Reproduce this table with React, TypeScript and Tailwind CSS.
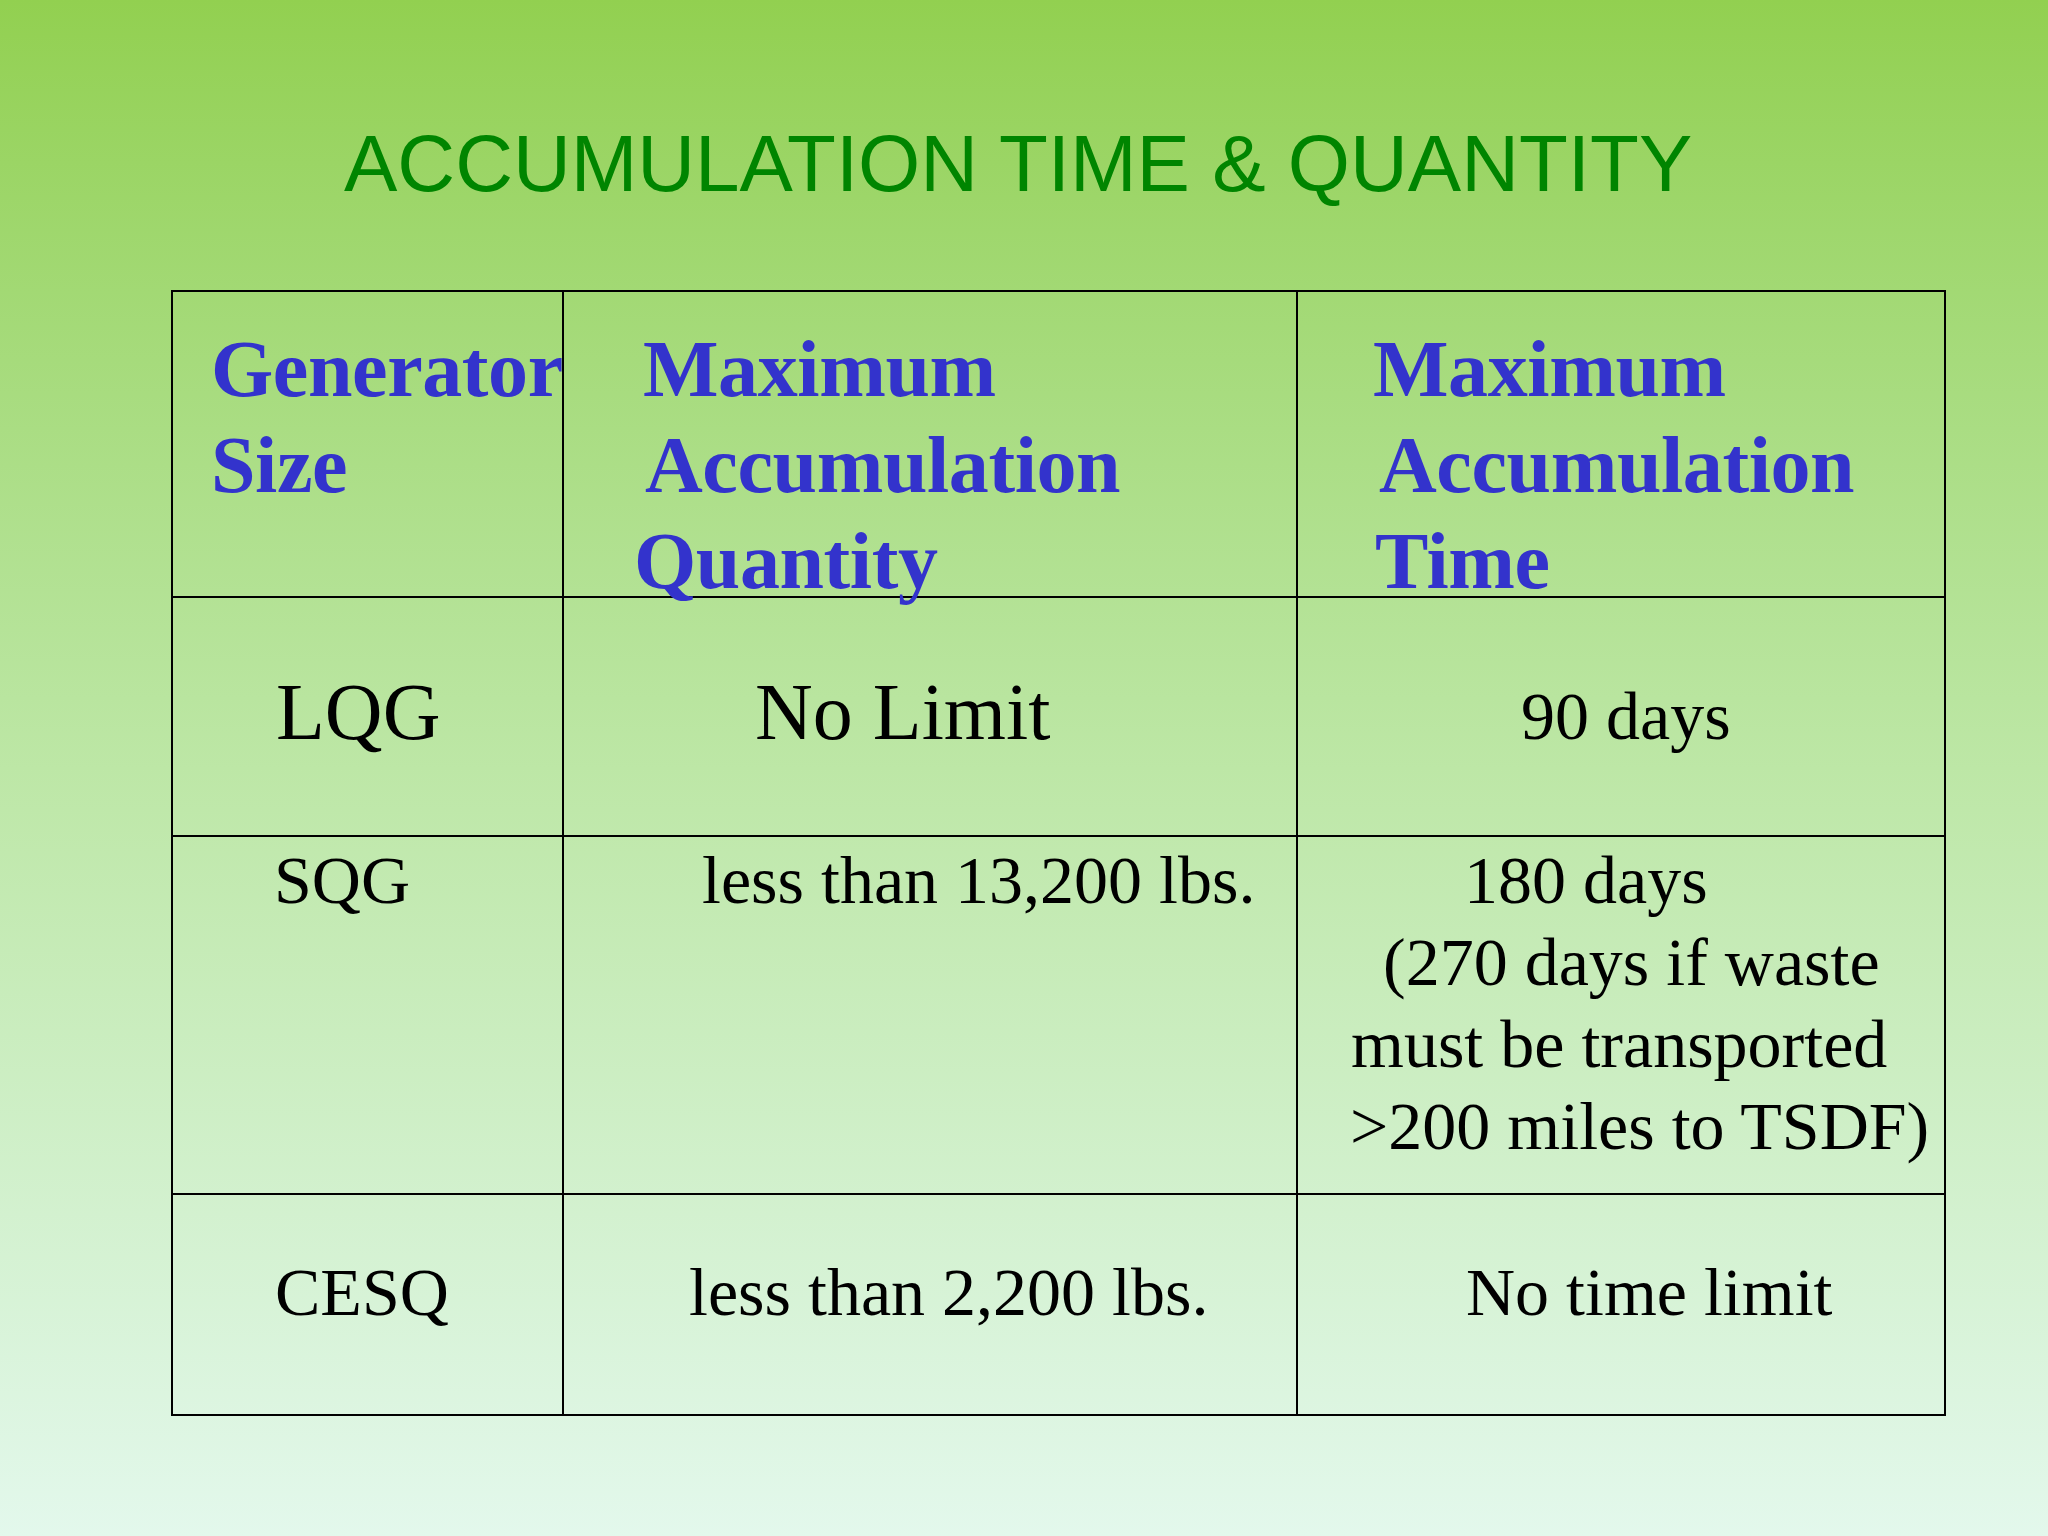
const serif = "font-['Liberation_Serif','Times_New_Roman',serif]";

function HeaderLine({ pl, children }: { pl: string; children: React.ReactNode }) {
  return <div className={`${pl} whitespace-nowrap`}>{children}</div>;
}

export default function App() {
  return (
    <div className="w-[2048px] h-[1536px] overflow-hidden bg-gradient-to-b from-[#92d050] via-[#bde7a6] to-[#e3f8ec]">
      <h1 className="pt-[124px] pl-[344px] text-[80px] leading-[80px] text-[#008500] font-['Liberation_Sans',Arial,sans-serif] whitespace-nowrap">
        ACCUMULATION TIME &amp; QUANTITY
      </h1>

      <div
        className={`${serif} mt-[86px] ml-[171px] w-[1775px] border-2 border-black grid grid-cols-[391px_734px_646px] grid-rows-[306px_239px_358px_219px] text-black`}
      >
        {/* header row */}
        <div className="border-r-2 border-b-2 border-black pt-[29px] text-[80px] leading-[96px] font-bold tracking-[-0.4px] text-[#3333cc]">
          <HeaderLine pl="pl-[38px]">Generator</HeaderLine>
          <HeaderLine pl="pl-[38px]">Size</HeaderLine>
        </div>
        <div className="border-r-2 border-b-2 border-black pt-[29px] text-[80px] leading-[96px] font-bold tracking-[-0.4px] text-[#3333cc]">
          <HeaderLine pl="pl-[79px]">Maximum</HeaderLine>
          <HeaderLine pl="pl-[81px]">Accumulation</HeaderLine>
          <HeaderLine pl="pl-[70px]">Quantity</HeaderLine>
        </div>
        <div className="border-b-2 border-black pt-[29px] text-[80px] leading-[96px] font-bold tracking-[-0.4px] text-[#3333cc]">
          <HeaderLine pl="pl-[75px]">Maximum</HeaderLine>
          <HeaderLine pl="pl-[81px]">Accumulation</HeaderLine>
          <HeaderLine pl="pl-[77px]">Time</HeaderLine>
        </div>

        {/* LQG */}
        <div className="border-r-2 border-b-2 border-black pt-[66px] pl-[103px] text-[80px] leading-[96px]">LQG</div>
        <div className="border-r-2 border-b-2 border-black pt-[66px] pl-[191px] text-[80px] leading-[96px]">No Limit</div>
        <div className="border-b-2 border-black pt-[77px] pl-[223px] text-[68px] leading-[82px]">90 days</div>

        {/* SQG */}
        <div className="border-r-2 border-b-2 border-black pt-[2px] pl-[101px] text-[68px] leading-[82px]">SQG</div>
        <div className="border-r-2 border-b-2 border-black pt-[2px] pl-[138px] text-[68px] leading-[82px] whitespace-nowrap">
          less than 13,200 lbs.
        </div>
        <div className="border-b-2 border-black pt-[2px] text-[68px] leading-[82px] whitespace-nowrap">
          <div className="pl-[166px]">180 days</div>
          <div className="pl-[85px]">(270 days if waste</div>
          <div className="pl-[53px]">must be transported</div>
          <div className="pl-[52px]">&gt;200 miles to TSDF)</div>
        </div>

        {/* CESQ */}
        <div className="border-r-2 border-black pt-[56px] pl-[102px] text-[68px] leading-[82px]">CESQ</div>
        <div className="border-r-2 border-black pt-[56px] pl-[125px] text-[68px] leading-[82px] whitespace-nowrap">
          less than 2,200 lbs.
        </div>
        <div className="pt-[56px] pl-[168px] text-[68px] leading-[82px] whitespace-nowrap">No time limit</div>
      </div>
    </div>
  );
}
